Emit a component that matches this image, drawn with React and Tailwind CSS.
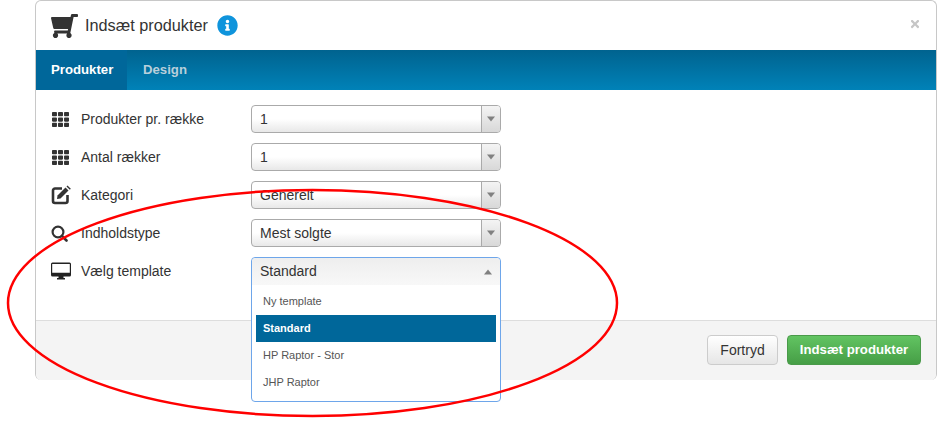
import React from "react";
import { FaShoppingCart, FaTh, FaInfoCircle, FaTimes } from "react-icons/fa";

function Arrow({ up }) {
  return (
    <svg width="8" height="6" viewBox="0 0 8 6" className="text-[#808080]">
      <path d={up ? "M4 0.5L8 5.5H0Z" : "M0 0.5H8L4 5.5Z"} fill="currentColor" />
    </svg>
  );
}

function EditIcon() {
  return (
    <svg width="20" height="20" viewBox="0 0 20 20" className="text-[#333]">
      <path d="M11 3.5H4A2 2 0 0 0 2 5.500V16A2 2 0 0 0 4 18H14.500A2 2 0 0 0 16.500 16V10" fill="none" stroke="currentColor" strokeWidth="2.6" />
      <path d="M6.500 10.500L14.500 2.500L17.500 5.500L9.500 13.500L6 14Z" fill="currentColor" />
      <path d="M15.500 1.500L16.500 0.500L19.800 3.800L18.800 4.800Z" fill="currentColor" />
    </svg>
  );
}

function SearchIcon() {
  return (
    <svg width="17" height="17" viewBox="0 0 17 17" className="text-[#333]">
      <circle cx="7" cy="7" r="5.400" fill="none" stroke="currentColor" strokeWidth="2.200" />
      <path d="M11 11L15.500 15.500" fill="none" stroke="currentColor" strokeWidth="2.600" strokeLinecap="round" />
    </svg>
  );
}

function DesktopIcon() {
  return (
    <svg width="20" height="18" viewBox="0 0 20 18" className="text-[#222]">
      <path fillRule="evenodd" d="M1.500 0.500H18.500A1.500 1.500 0 0 1 20 2V13A1.500 1.500 0 0 1 18.500 14.500H1.500A1.500 1.500 0 0 1 0 13V2A1.500 1.500 0 0 1 1.500 0.500ZM1.200 2V10.800H18.800V2Z" fill="currentColor" />
      <path d="M7.500 14H12.500V16H14V17.500H6V16H7.500Z" fill="currentColor" />
    </svg>
  );
}

function Row({ icon, label, value }) {
  return (
    <div className="flex items-center h-[28px]">
      <div className="w-[45px] pl-[15px] flex items-center shrink-0">{icon}</div>
      <div className="w-[170px] shrink-0 text-[14px] text-[#333]">{label}</div>
      {value !== undefined ? (
        <div className="w-[250px] h-[28px] flex rounded-[4px] border border-[#aaaaaa] bg-gradient-to-b from-white via-white to-[#e8e8e8] overflow-hidden">
          <div className="flex-1 pl-[8px] text-[14px] leading-[26px] text-[#333]">{value}</div>
          <div className="w-[19px] border-l border-[#aaaaaa] flex items-center justify-center bg-gradient-to-b from-[#f4f4f4] to-[#d8d8d8]">
            <Arrow />
          </div>
        </div>
      ) : null}
    </div>
  );
}

export default function App() {
  return (
    <div className="relative w-[937px] h-[428px] bg-white overflow-hidden pl-[35px] font-['Liberation_Sans',Arial,sans-serif]">
      <div className="w-[902px] h-[380px] flex flex-col border-x border-t border-[#c8c8c8] rounded-[6px] overflow-hidden">
        <div className="h-[49px] flex items-center pl-[15px] pr-[15px] shrink-0">
          <FaShoppingCart className="text-[#333] w-[27px] h-[24px] -scale-x-100" />
          <span className="ml-[7px] text-[16.25px] text-[#333]">Indsæt produkter</span>
          <FaInfoCircle className="ml-[9px] text-[#0f94dc] w-[21px] h-[21px]" />
          <FaTimes className="ml-auto mb-[3px] text-[#c6c6c6] w-[12px] h-[12px]" />
        </div>
        <div className="h-[40px] flex shrink-0 bg-gradient-to-b from-[#00638f] to-[#0082b8]">
          <div className="w-[91px] pl-[15px] flex items-center text-[13.200px] font-bold text-white bg-[#00679a]">Produkter</div>
          <div className="ml-[16px] flex items-center text-[13.200px] font-bold text-[#b8cfdb]">Design</div>
        </div>
        <div className="h-[230px] flex flex-col gap-[10px] pt-[15px] shrink-0">
          <Row icon={<FaTh className="text-[#333] w-[19px] h-[17px]" />} label="Produkter pr. række" value="1" />
          <Row icon={<FaTh className="text-[#333] w-[19px] h-[17px]" />} label="Antal rækker" value="1" />
          <Row icon={<EditIcon />} label="Kategori" value="Generelt" />
          <Row icon={<SearchIcon />} label="Indholdstype" value="Mest solgte" />
          <Row icon={<DesktopIcon />} label="Vælg template" />
        </div>
        <div className="flex-1 border-t border-[#dddddd] bg-[#f4f4f4] flex items-start justify-end gap-[9px] pt-[14px] pr-[15px]">
          <div className="h-[30px] w-[71px] flex items-center justify-center rounded-[4px] border border-[#cccccc] bg-gradient-to-b from-white to-[#e6e6e6] text-[14px] text-[#333]">Fortryd</div>
          <div className="h-[30px] w-[134px] flex items-center justify-center rounded-[4px] border border-[#4a9a4a] bg-gradient-to-b from-[#62c462] to-[#469e46] text-[13.200px] font-bold text-white">Indsæt produkter</div>
        </div>
      </div>

      <div className="absolute left-[251px] top-[257px] w-[250px] h-[145px] rounded-[4px] border border-[#6ea6ea] bg-white">
        <div className="h-[27px] pl-[8px] pr-[8px] flex items-center justify-between bg-gradient-to-b from-[#eeeeee] to-[#f8f8f8] rounded-t-[4px] text-[14px] text-[#333]">
          <span>Standard</span>
          <Arrow up />
        </div>
        <div className="px-[4px] pt-[3px] text-[11px] text-[#555]">
          <div className="h-[27px] pl-[7px] flex items-center">Ny template</div>
          <div className="h-[27px] pl-[7px] flex items-center bg-[#00679a] font-bold text-white">Standard</div>
          <div className="h-[27px] pl-[7px] flex items-center">HP Raptor - Stor</div>
          <div className="h-[27px] pl-[7px] flex items-center">JHP Raptor</div>
        </div>
      </div>

      <svg className="absolute left-0 top-0 pointer-events-none" width="937" height="428" viewBox="0 0 937 428">
        <ellipse cx="312.5" cy="303" rx="304.5" ry="113" fill="none" stroke="#ff0000" strokeWidth="2.500" />
      </svg>
    </div>
  );
}
